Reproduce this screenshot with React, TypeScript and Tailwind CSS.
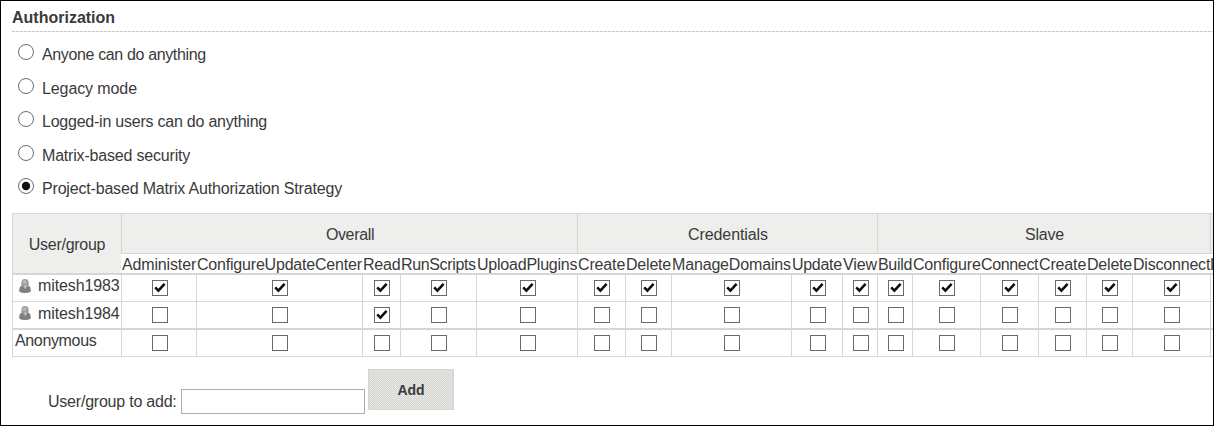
import React from "react";

type Column = { label: string; tracking: string; mitesh1984?: boolean };

const groups: { name: string; span: string; tracking: string }[] = [
  { name: "Overall", span: "col-span-5", tracking: "tracking-[-0.35px]" },
  { name: "Credentials", span: "col-span-5", tracking: "tracking-[-0.1px]" },
  { name: "Slave", span: "col-span-6", tracking: "tracking-[-0.2px]" },
  { name: "", span: "col-span-1", tracking: "" },
];

const columns: Column[] = [
  { label: "Administer", tracking: "tracking-[-0.15px]" },
  { label: "ConfigureUpdateCenter", tracking: "tracking-[-0.2px]" },
  { label: "Read", tracking: "tracking-[-0.2px]", mitesh1984: true },
  { label: "RunScripts", tracking: "tracking-[-0.35px]" },
  { label: "UploadPlugins", tracking: "tracking-[-0.22px]" },
  { label: "Create", tracking: "tracking-[-0.15px]" },
  { label: "Delete", tracking: "tracking-[-0.2px]" },
  { label: "ManageDomains", tracking: "tracking-[-0.16px]" },
  { label: "Update", tracking: "tracking-[-0.3px]" },
  { label: "View", tracking: "tracking-[-0.1px]" },
  { label: "Build", tracking: "tracking-[-0.3px]" },
  { label: "Configure", tracking: "tracking-[-0.2px]" },
  { label: "Connect", tracking: "tracking-[-0.35px]" },
  { label: "Create", tracking: "tracking-[-0.15px]" },
  { label: "Delete", tracking: "tracking-[-0.2px]" },
  { label: "Disconnect", tracking: "tracking-[-0.2px]" },
];

const strategies = [
  { text: "Anyone can do anything", tracking: "tracking-[-0.36px]" },
  { text: "Legacy mode", tracking: "tracking-[-0.1px]" },
  { text: "Logged-in users can do anything", tracking: "tracking-[-0.23px]" },
  { text: "Matrix-based security", tracking: "tracking-[-0.19px]" },
  { text: "Project-based Matrix Authorization Strategy", tracking: "tracking-[-0.18px]" },
];

function Radio({ checked }: { checked: boolean }) {
  return (
    <svg className="size-4 shrink-0" viewBox="0 0 16 16">
      <circle cx="8" cy="8" r="7.5" fill="#fff" stroke="#6b6b6b" />
      {checked && <circle cx="8" cy="8" r="4.2" fill="#111" />}
    </svg>
  );
}

function Checkbox({ checked }: { checked: boolean }) {
  return (
    <svg className="size-4 shrink-0" viewBox="0 0 16 16">
      <rect x="0.5" y="0.5" width="15" height="15" fill="#fff" stroke="#6a6a6c" />
      {checked && (
        <path d="M3.2 7.4 L6.4 10.7 L12.6 3.9" fill="none" stroke="#0c0c0c" strokeWidth="2.5" />
      )}
    </svg>
  );
}

function Person() {
  return (
    <svg className="h-4 w-3 shrink-0" viewBox="0 0 12 16">
      <path d="M0.2 13.4 Q0 8.8 2.8 7.6 H9.2 Q12 8.8 11.8 13.4 Q9.8 15 6 15 Q2.2 15 0.2 13.4Z" fill="#808080" />
      <ellipse cx="6" cy="5.4" rx="3.7" ry="4.3" fill="#999" />
      <path d="M4.8 7.6 L6.2 11.4 L7.8 7.6Z" fill="#c8c8c8" />
      <ellipse cx="5.6" cy="4" rx="2.3" ry="2.1" fill="#b6b6b6" />
    </svg>
  );
}

function CheckCells({ isChecked }: { isChecked: (c: Column) => boolean }) {
  return (
    <>
      {columns.map((c, i) => (
        <div key={i} className="flex justify-center border-l border-[#d6d6d2] pl-[1.5px] pt-[5px]">
          <Checkbox checked={isChecked(c)} />
        </div>
      ))}
      <div className="border-l border-[#d6d6d2]" />
    </>
  );
}

export default function App() {
  return (
    <div className="h-[426px] w-[1214px] overflow-hidden border border-black bg-white pl-[11px] font-['Liberation_Sans',Arial,sans-serif] text-[16px] leading-[18px] text-[#3a3a3a]">
      <h1 className="h-[30px] pt-2 font-bold">
        <span>Authorization</span>
      </h1>
      <div className="h-px bg-[repeating-linear-gradient(90deg,#cacaca_0px,#cacaca_3px,#efefef_3px,#efefef_4px)]" />

      <div className="grid h-[181px] grid-rows-[34px_33px_34px_33px_34px] pl-1.5 pt-3">
        {strategies.map((s, i) => (
          <label key={s.text} className="flex gap-2">
            <Radio checked={i === 4} />
            <span className={`pt-0.5 whitespace-nowrap ${s.tracking}`}>{s.text}</span>
          </label>
        ))}
      </div>

      <div className="grid grid-cols-[109px_75px_166px_38px_76px_101px_48px_46px_120px_51px_35px_35px_68px_58px_48px_46px_78px_3px] grid-rows-[40px_21px_27px_28px_27px] border-t border-[#d6d6d2] whitespace-nowrap">
        <div className="row-span-2 flex items-center justify-center border-b-2 border-l border-[#d6d6d2] bg-[#eeeeec] pt-[3px]">
          <span className="tracking-[-0.28px]">User/group</span>
        </div>
        {groups.map((g) => (
          <div key={g.span + g.name} className={`${g.span} flex items-center justify-center border-b border-l border-[#d6d6d2] bg-[#eeeeec] pl-px pt-0.5`}>
            <span className={g.tracking}>{g.name}</span>
          </div>
        ))}
        {columns.map((c, i) => (
          <div key={i} className="border-b-2 border-[#d6d6d2] pl-px pt-0.5">
            <span className={c.tracking}>{c.label}</span>
          </div>
        ))}
        <div className="overflow-hidden border-b-2 border-[#d6d6d2] pt-0.5">L</div>

        <div className="col-span-18 grid grid-cols-subgrid border-b border-[#d6d6d2]">
          <div className="flex gap-[7px] border-l border-[#d6d6d2] pl-1.5 pt-[3px]">
            <Person />
            <span className="-mt-px tracking-[-0.12px]">mitesh1983</span>
          </div>
          <CheckCells isChecked={() => true} />
        </div>
        <div className="col-span-18 grid grid-cols-subgrid border-b-2 border-[#d6d6d2]">
          <div className="flex gap-[7px] border-l border-[#d6d6d2] pl-1.5 pt-[3px]">
            <Person />
            <span className="tracking-[-0.12px]">mitesh1984</span>
          </div>
          <CheckCells isChecked={(c) => !!c.mitesh1984} />
        </div>
        <div className="col-span-18 grid grid-cols-subgrid border-b border-[#d6d6d2]">
          <div className="border-l border-[#d6d6d2] pl-0.5 pt-0.5">
            <span className="tracking-[-0.35px]">Anonymous</span>
          </div>
          <CheckCells isChecked={() => false} />
        </div>
      </div>

      <div className="flex pl-9 pt-3">
        <span className="w-[133px] pt-6 tracking-[-0.22px] whitespace-nowrap">User/group to add:</span>
        <input className="mt-5 h-[25px] w-[184px] border border-[#adadb2] bg-white" />
        <button className="ml-[3px] h-[41px] w-[86px] border border-[#d4d4d0] bg-[#d8d8d4] bg-[conic-gradient(#e6e6e2_25%,#d6d6d2_0_50%,#e6e6e2_0_75%,#d6d6d2_0)] bg-[length:2px_2px] text-[14px] font-bold">Add</button>
      </div>
    </div>
  );
}
